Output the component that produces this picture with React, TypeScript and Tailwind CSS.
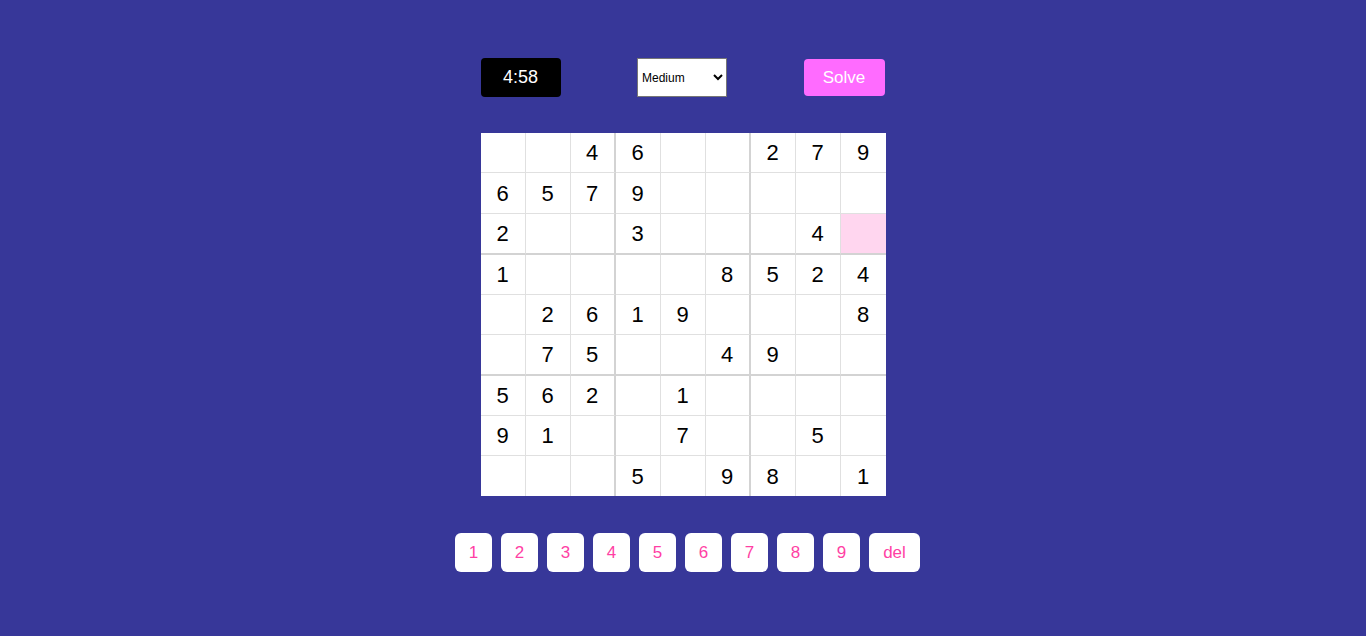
import React from 'react';

const puzzle: (number | null)[][] = [
    [null, null, 4, 6, null, null, 2, 7, 9],
    [6, 5, 7, 9, null, null, null, null, null],
    [2, null, null, 3, null, null, null, 4, null],
    [1, null, null, null, null, 8, 5, 2, 4],
    [null, 2, 6, 1, 9, null, null, null, 8],
    [null, 7, 5, null, null, 4, 9, null, null],
    [5, 6, 2, null, 1, null, null, null, null],
    [9, 1, null, null, 7, null, null, 5, null],
    [null, null, null, 5, null, 9, 8, null, 1],
];

// row heights include the bottom border
const rowHeights = ['h-[40px]', 'h-[41px]', 'h-[41px]', 'h-[40px]', 'h-[40px]', 'h-[41px]', 'h-[40px]', 'h-[40px]', 'h-[40px]'];

const App: React.FC = () => {
    const selected = { r: 2, c: 8 };

    return (
        <div className="min-h-screen bg-[#373799] font-['Liberation_Sans',Arial,sans-serif] flex flex-col items-center pt-[58px]">
            {/* Top bar */}
            <div className="w-[404px] -ml-px flex items-center justify-between">
                <div className="w-[80px] h-[39px] bg-black rounded-[4px] flex items-center justify-center text-white text-[18px]">
                    4:58
                </div>
                <select
                    defaultValue="medium"
                    className="w-[90px] h-[39px] bg-white border border-[#767676] text-[12px] text-black pl-0"
                >
                    <option value="easy">Easy</option>
                    <option value="medium">Medium</option>
                    <option value="hard">Hard</option>
                </select>
                <button className="w-[81px] h-[37px] bg-[#ff6bff] rounded-[4px] text-white text-[17px]">
                    Solve
                </button>
            </div>

            {/* Board */}
            <div className="mt-[36px] bg-white flex flex-col">
                {puzzle.map((row, r) => (
                    <div key={r} className={`flex ${rowHeights[r]}`}>
                        {row.map((val, c) => {
                            const right = c === 8 ? '' : c === 2 || c === 5 ? 'border-r-2 border-r-[#d3d3d3]' : 'border-r border-r-[#e0e0e0]';
                            const bottom = r === 8 ? '' : r === 2 || r === 5 ? 'border-b-2 border-b-[#d3d3d3]' : 'border-b border-b-[#e0e0e0]';
                            const isSel = selected.r === r && selected.c === c;
                            return (
                                <div
                                    key={c}
                                    className={`w-[45px] h-full flex items-center justify-center text-[22px] text-black ${right} ${bottom} ${isSel ? 'bg-[#ffd6ef]' : ''}`}
                                >
                                    {val ?? ''}
                                </div>
                            );
                        })}
                    </div>
                ))}
            </div>

            {/* Number pad */}
            <div className="mt-[37px] flex">
                {[1, 2, 3, 4, 5, 6, 7, 8, 9].map((n) => (
                    <button
                        key={n}
                        className="ml-[9px] w-[37px] h-[39px] bg-white rounded-[6px] text-[#ff3fa4] text-[17px]"
                    >
                        {n}
                    </button>
                ))}
                <button className="ml-[9px] w-[51px] h-[39px] bg-white rounded-[6px] text-[#ff3fa4] text-[17px]">
                    del
                </button>
            </div>
        </div>
    );
};

export default App;
